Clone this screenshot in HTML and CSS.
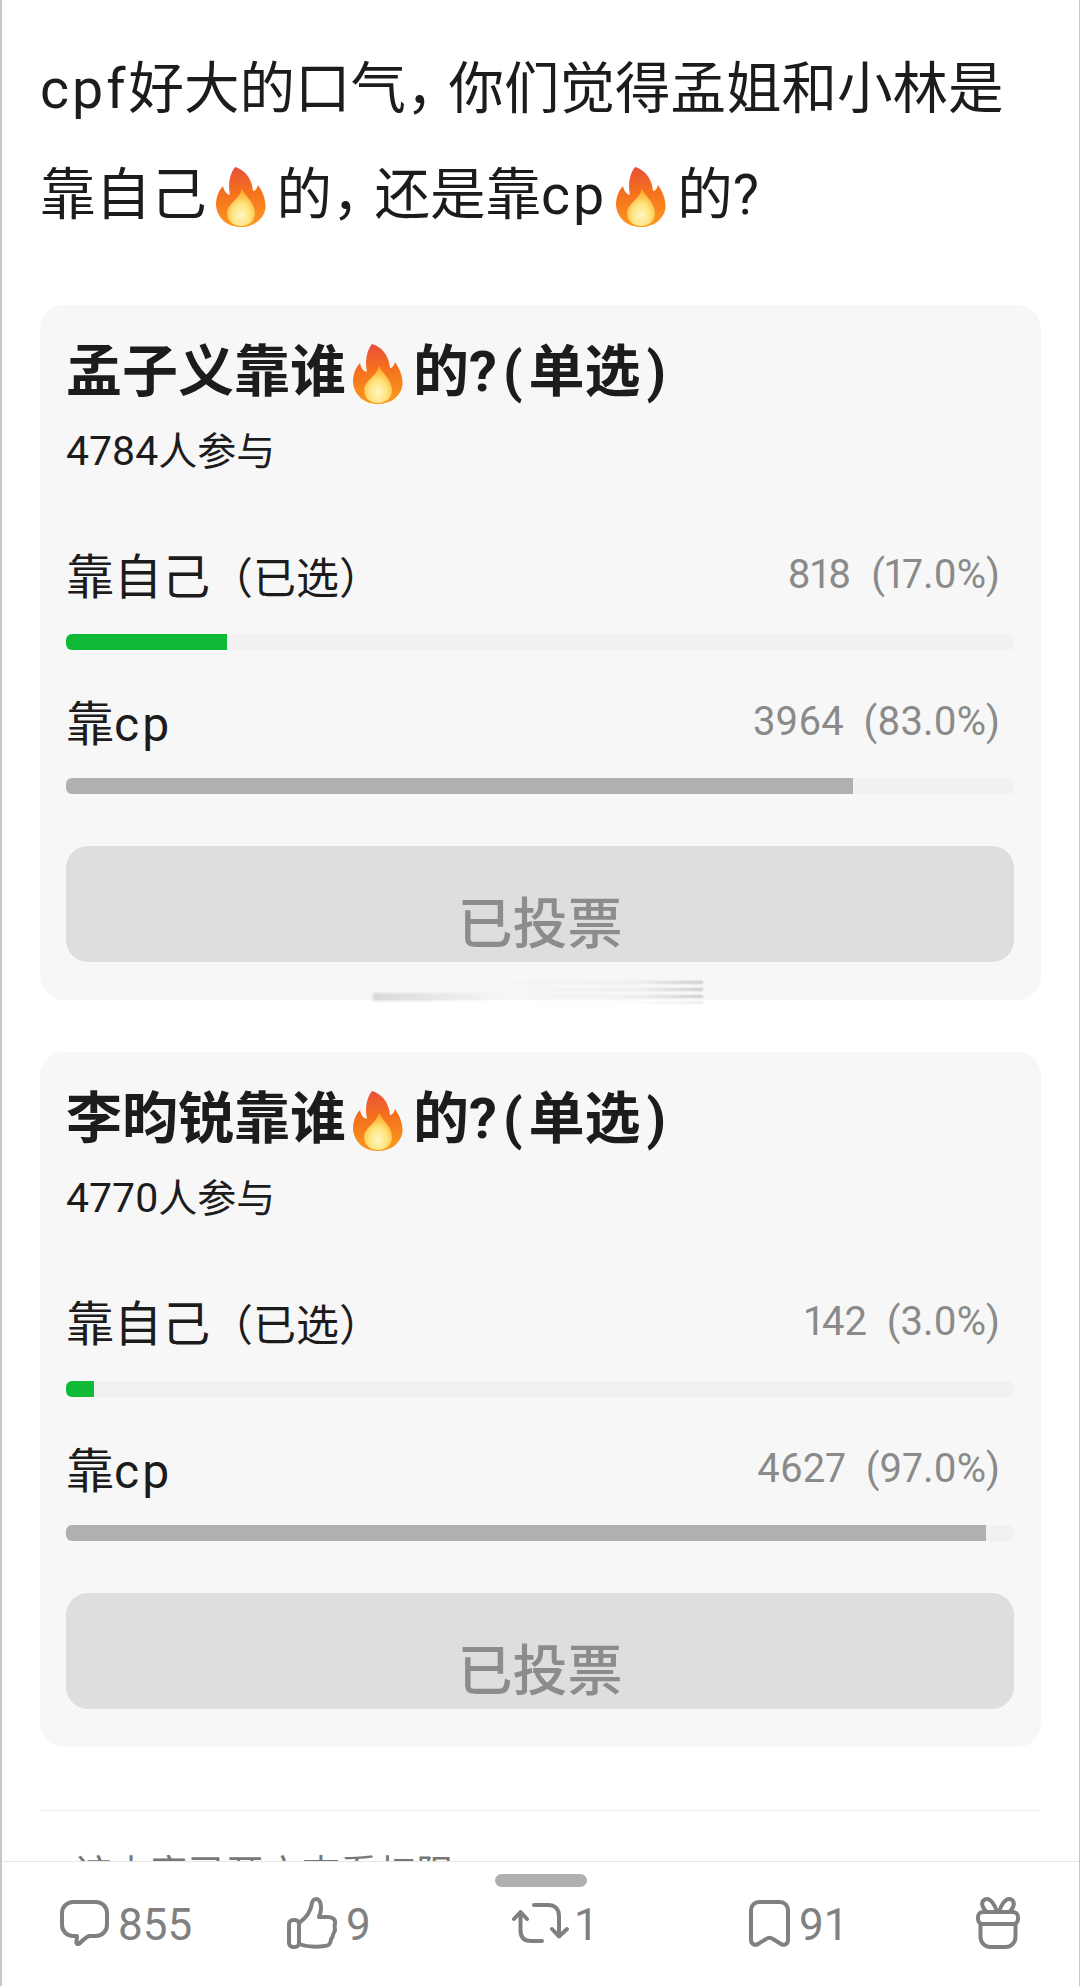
FILE: index.html
```html
<!DOCTYPE html>
<html lang="zh-CN">
<head>
  <meta charset="UTF-8">
  <title>投票</title>
  <link rel="stylesheet" href="styles.css">
</head>
<body>
  <!-- shared flame emoji -->
  <svg class="defs" width="0" height="0">
    <defs>
      <linearGradient id="flameOuter" x1="0.4" y1="0" x2="0.5" y2="1">
        <stop offset="0" stop-color="#e8503a"/>
        <stop offset="0.45" stop-color="#f5721c"/>
        <stop offset="1" stop-color="#fb9a1e"/>
      </linearGradient>
      <radialGradient id="flameInner" cx="0.5" cy="0.72" r="0.62">
        <stop offset="0" stop-color="#fff6c4"/>
        <stop offset="0.55" stop-color="#ffe27a"/>
        <stop offset="1" stop-color="#ffad2e"/>
      </radialGradient>
      <symbol id="flame" viewBox="0 0 50 60">
        <path fill="url(#flameOuter)" d="M19 0C27 2 36 10 37 24C39 24 41 22 42 18C47 25 50 33 49.500 41C48 52 38 60 25 60C11 60 1 51 0 38C0 30 3 23 7 19C8 24 10 27 14 28C12 18 13 8 19 0Z"/>
        <path fill="url(#flameInner)" d="M26 22C30 30 39 36 39 46C39 54 33 59 25 59C17 59 11 54 11 46C11 37 23 33 26 22Z"/>
      </symbol>
    </defs>
  </svg>

  <main class="page">
    <p class="post-text"><span class="latin">cpf</span>好大的口气<span class="comma">，</span>你们觉得孟姐和小林是<br>靠自己<svg class="flame"><use href="#flame"/></svg>的<span class="comma">，</span>还是靠<span class="latin">cp</span><svg class="flame"><use href="#flame"/></svg>的?</p>

    <section class="poll">
      <h2 class="poll-title">孟子义靠谁<svg class="flame"><use href="#flame"/></svg>的?<span class="paren">(</span>单选<span class="paren">)</span></h2>
      <div class="poll-count"><span class="num">4784</span>人参与</div>
      <div class="option">
        <div class="option-row">
          <span class="option-name">靠自己<small>（已选）</small></span>
          <span class="option-value">818 (17.0%)</span>
        </div>
        <div class="track"><div class="fill picked" style="width:17%"></div></div>
      </div>
      <div class="option">
        <div class="option-row">
          <span class="option-name">靠<span class="latin">cp</span></span>
          <span class="option-value">3964 (83.0%)</span>
        </div>
        <div class="track"><div class="fill" style="width:83%"></div></div>
      </div>
      <div class="voted">已投票</div>
      <div class="smear"></div>
    </section>

    <section class="poll">
      <h2 class="poll-title">李昀锐靠谁<svg class="flame"><use href="#flame"/></svg>的?<span class="paren">(</span>单选<span class="paren">)</span></h2>
      <div class="poll-count"><span class="num">4770</span>人参与</div>
      <div class="option">
        <div class="option-row">
          <span class="option-name">靠自己<small>（已选）</small></span>
          <span class="option-value">142 (3.0%)</span>
        </div>
        <div class="track"><div class="fill picked" style="width:3%"></div></div>
      </div>
      <div class="option">
        <div class="option-row">
          <span class="option-name">靠<span class="latin">cp</span></span>
          <span class="option-value">4627 (97.0%)</span>
        </div>
        <div class="track"><div class="fill" style="width:97%"></div></div>
      </div>
      <div class="voted">已投票</div>
    </section>

    <hr class="divider">
    <p class="next-text">该内容已开启查看权限</p>
  </main>

  <!-- Bottom action bar -->
  <footer class="actions">
    <div class="handle"></div>
    <div class="action">
      <svg class="icon" width="49" height="47" viewBox="0 0 49 47"><path d="M13 2H36a11 11 0 0 1 11 11V25a11 11 0 0 1-11 11H29C26 37 23 40 20 43C18 45 16 44 16.500 41L17 36H13A11 11 0 0 1 2 25V13A11 11 0 0 1 13 2Z"/></svg>
      <span>855</span>
    </div>
    <div class="action">
      <svg class="icon" width="50" height="52" viewBox="0 0 50 52"><path d="M12 26C19 21 24 14 25 6C26 1 31 1 33 5C35 10 34 15 32 20H41C46 20 49 23 48 27C47 29 48 31 48 33C48 35 46 36 46 38C46 40 45 41 44 42C44 46 42 49 38 49C30 50 20 50 12 47"/><rect x="2" y="23" width="10" height="27" rx="4"/></svg>
      <span>9</span>
    </div>
    <div class="action tight">
      <svg class="icon" width="59" height="40" viewBox="0 0 59 40"><path d="M2 16L8.500 9L15 16M8.500 9V27C8.500 34 12 38 19 38H30M22 2H36C43 2 47 6 47 13V33M40 26L47 33.500L55 26"/></svg>
      <span>1</span>
    </div>
    <div class="action">
      <svg class="icon" width="41" height="47" viewBox="0 0 41 47"><path d="M10 2H31A8 8 0 0 1 39 10V40C39 44 35 46 32 44L24 39C22 37.500 19 37.500 17 39L9 44C6 46 2 44 2 40V10A8 8 0 0 1 10 2Z"/></svg>
      <span>91</span>
    </div>
    <div class="action">
      <svg class="icon" width="44" height="52" viewBox="0 0 44 52"><rect x="2" y="15" width="40" height="12" rx="5"/><path d="M4.500 27V40A10 10 0 0 0 14.500 50H29.500A10 10 0 0 0 39.500 40V27M21 15C19 8 15 2 11 2C7 2 5 6 7 10C8 12 9 14 11 15M23 15C25 8 29 2 33 2C37 2 39 6 37 10C36 12 35 14 33 15"/></svg>
    </div>
  </footer>
</body>
</html>
```

FILE: styles.css
```css
/* Page frame */
html, body {
  margin: 0;
  height: 100%;
}
body {
  box-sizing: border-box;
  height: 1986px;
  display: flex;
  flex-direction: column;
  overflow: hidden;
  background: #fff;
  border-left: 2px solid #c8c8c8;
  border-right: 1px solid #c8c8c8;
  font-family: Roboto, "Noto Sans CJK SC", sans-serif;
  color: #1c1c1c;
}
.defs {
  position: absolute;
}
.page {
  flex: 1;
  min-height: 0;
  overflow: hidden;
  padding: 0 38px;
}
/* Post text */
.post-text {
  margin: 0;
  padding-top: 37px;
  font-size: 55.5px;
  line-height: 106px;
}
.post-text .flame {
  margin: 0 11px 0 9px;
}
.latin {
  letter-spacing: 3px;
}
.comma {
  letter-spacing: -13px;
}
.flame {
  width: 50px;
  height: 60px;
  margin: 0 10px 0 7px;
  vertical-align: -13px;
}
/* Poll card */
.poll {
  position: relative;
  margin-top: 56px;
  height: 695px;
  box-sizing: border-box;
  padding: 37px 27px 0 26px;
  background: #f7f7f7;
  border-radius: 24px;
}
.poll + .poll {
  margin-top: 52px;
}
.poll-title {
  margin: 0;
  font-size: 56px;
  line-height: 60px;
  font-weight: 700;
}
.paren {
  margin: 0 6px;
}
.poll-count {
  margin-top: 22px;
  font-size: 39px;
  line-height: 50px;
}
.num {
  font-size: 41px;
}
.option {
  height: 144px;
}
.poll-count + .option {
  margin-top: 66px;
  height: 147px;
}
.poll-count + .option .track {
  margin-top: 31px;
}
.option-row {
  display: flex;
  justify-content: space-between;
  align-items: center;
  height: 60px;
  padding-right: 14px;
}
.option-name {
  font-size: 48px;
}
.option-name small {
  font-size: 43px;
}
.option-value {
  padding-top: 3px;
  font-size: 40px;
  word-spacing: 10px;
  font-variant-numeric: proportional-nums;
  color: #8a8a8a;
}
.track {
  margin-top: 28px;
  height: 16px;
  background: #f1f1f1;
  border-radius: 6px;
  overflow: hidden;
}
.fill {
  height: 100%;
  background: #b0b0b0;
}
.fill.picked {
  background: #0fba37;
}
.voted {
  box-sizing: border-box;
  margin-top: 12px;
  height: 116px;
  padding-top: 49px;
  text-align: center;
  font-size: 55px;
  line-height: 58px;
  font-weight: 500;
  color: #8c8c8c;
  background: #dedede;
  border-radius: 22px;
  overflow: hidden;
}
/* Smeared watermark over the card edge */
.smear {
  position: absolute;
  left: 333px;
  bottom: -3px;
  width: 330px;
  height: 22px;
  filter: blur(1px);
}
.smear::before {
  content: "";
  position: absolute;
  left: 0;
  bottom: 2px;
  width: 130px;
  height: 8px;
  background: linear-gradient(90deg, #d8d8d8, rgba(240,240,240,0));
}
.smear::after {
  content: "";
  position: absolute;
  inset: 0;
  background: repeating-linear-gradient(180deg, rgba(150,150,150,0.5) 0 3px, rgba(255,255,255,0.7) 3px 7px);
  -webkit-mask-image: linear-gradient(90deg, transparent 35%, rgba(0,0,0,0.2) 80%, #000 100%);
  mask-image: linear-gradient(90deg, transparent 35%, rgba(0,0,0,0.2) 80%, #000 100%);
}
/* Below the polls */
.divider {
  margin: 63px 0 0;
  border: 0;
  height: 1px;
  background: #ececec;
}
.next-text {
  margin: 38px 0 0 34px;
  font-size: 38px;
  line-height: 50px;
  color: #777;
}
/* Bottom bar */
.actions {
  position: relative;
  flex: none;
  box-sizing: border-box;
  height: 125px;
  border-top: 1px solid #e6e6e6;
  padding: 35px 0 0 58px;
  display: grid;
  grid-template-columns: 227px 225px 237px 227px auto;
  align-items: start;
  background: #fff;
}
.handle {
  position: absolute;
  top: 12px;
  left: 493px;
  width: 92px;
  height: 13px;
  background: #b0b0b0;
  border-radius: 7px;
}
.action {
  display: flex;
  align-items: center;
  gap: 9px;
  height: 52px;
  font-size: 44px;
  color: #808080;
}
.action span {
  padding-top: 3px;
}
.action.tight {
  gap: 3px;
}
.icon {
  fill: none;
  stroke: #808080;
  stroke-width: 4;
  stroke-linecap: round;
  stroke-linejoin: round;
}
```
